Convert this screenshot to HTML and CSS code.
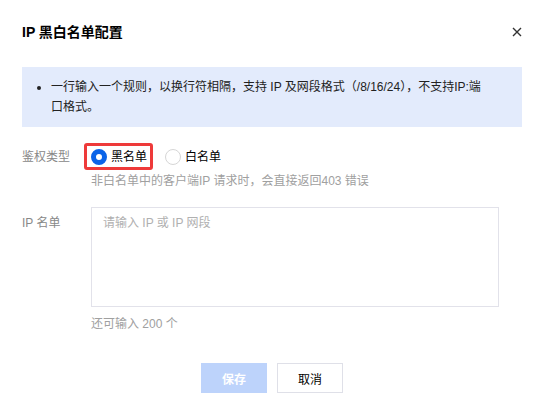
FILE: index.html
```html
<!DOCTYPE html>
<html lang="zh-CN">
<head>
<meta charset="utf-8">
<title>IP 黑白名单配置</title>
<link rel="stylesheet" href="styles.css">
</head>
<body>
<div class="dialog">
  <div class="dialog-header">
    <h3 class="dialog-title">IP 黑白名单配置</h3>
    <button class="close-btn" aria-label="关闭">
      <svg width="10" height="10" viewBox="0 0 10 10"><path d="M1 1 L9 9 M9 1 L1 9" stroke="#333" stroke-width="1.4" fill="none"/></svg>
    </button>
  </div>
  <div class="alert">
    <ul class="alert-list">
      <li>一行输入一个规则，以换行符相隔，支持 IP 及网段格式（/8/16/24），不支持IP:端口格式。</li>
    </ul>
  </div>
  <div class="form">
    <div class="form-row">
      <div class="form-label">鉴权类型</div>
      <div class="form-control">
        <div class="radio-group">
          <label class="radio radio-highlight"><span class="radio-dot checked"></span><span>黑名单</span></label>
          <label class="radio"><span class="radio-dot"></span><span>白名单</span></label>
        </div>
        <div class="help">非白名单中的客户端IP 请求时，会直接返回403 错误</div>
      </div>
    </div>
    <div class="form-row row-ip">
      <div class="form-label label-ip">IP 名单</div>
      <div class="form-control">
        <textarea class="textarea" placeholder="请输入 IP 或 IP 网段"></textarea>
        <div class="help counter">还可输入 200 个</div>
      </div>
    </div>
  </div>
  <div class="footer">
    <button class="btn btn-primary" disabled>保存</button>
    <button class="btn btn-default">取消</button>
  </div>
</div>
</body>
</html>
```
FILE: styles.css
```css
* { box-sizing: border-box; }
html, body { margin: 0; padding: 0; background: #fff; }
body {
  font-family: "Liberation Sans", "Noto Sans CJK SC", sans-serif;
  font-size: 12px;
  color: #000;
}
.dialog {
  width: 548px;
  height: 416px;
  padding: 22px 26px 0 22px;
}
.dialog-header {
  display: flex;
  justify-content: space-between;
  align-items: center;
  height: 20px;
}
.dialog-title {
  margin: 0;
  font-size: 14px;
  font-weight: bold;
  line-height: 20px;
  color: #000;
}
.close-btn {
  border: 0;
  background: none;
  padding: 0;
  width: 10px;
  height: 10px;
  display: flex;
}
.alert {
  margin-top: 25px;
  background: #e3ebfc;
  padding: 10px 38px 10px 14px;
  color: #222;
  line-height: 20px;
}
.alert-list {
  margin: 0;
  padding-left: 15px;
  list-style: disc;
}
.form { margin-top: 20px; }
.form-row { display: flex; }
.form-label {
  width: 69px;
  flex: none;
  color: #888;
  line-height: 20px;
}
.form-control { flex: 1; }
.radio-group {
  display: flex;
  align-items: center;
  height: 20px;
  gap: 18px;
}
.radio {
  display: flex;
  align-items: center;
  gap: 4px;
  line-height: 20px;
  color: #000;
}
.radio-highlight { position: relative; }
.radio-highlight::after {
  content: "";
  position: absolute;
  left: -7px;
  top: -4px;
  right: -6px;
  bottom: -3px;
  border: 3px solid #ee3a3a;
  border-radius: 3px;
}
.radio-dot {
  width: 16px;
  height: 16px;
  border-radius: 50%;
  border: 1px solid #d6d6d6;
  background: #fff;
  flex: none;
}
.radio-dot.checked { border: 5px solid #0a63e8; }
.help {
  margin-top: 4px;
  line-height: 20px;
  color: #a0a0a0;
}
.row-ip { margin-top: 16px; }
.label-ip { padding-top: 6px; }
.textarea {
  display: block;
  width: 408px;
  height: 100px;
  border: 1px solid #e2e2ea;
  padding: 5px 11px;
  font: inherit;
  line-height: 20px;
  resize: none;
  outline: none;
}
.textarea::placeholder { color: #b0b0b0; }
.counter { margin-top: 7px; }
.footer {
  margin-top: 29px;
  display: flex;
  justify-content: center;
  gap: 10px;
}
.btn {
  width: 66px;
  height: 30px;
  font: inherit;
  font-size: 12px;
  border: 1px solid transparent;
  padding: 0;
}
.btn-primary {
  background: #bdd3fb;
  color: #fff;
  font-weight: bold;
  border-color: #bdd3fb;
}
.btn-default {
  background: #fff;
  border-color: #dfe0e8;
  color: #000;
}
```
